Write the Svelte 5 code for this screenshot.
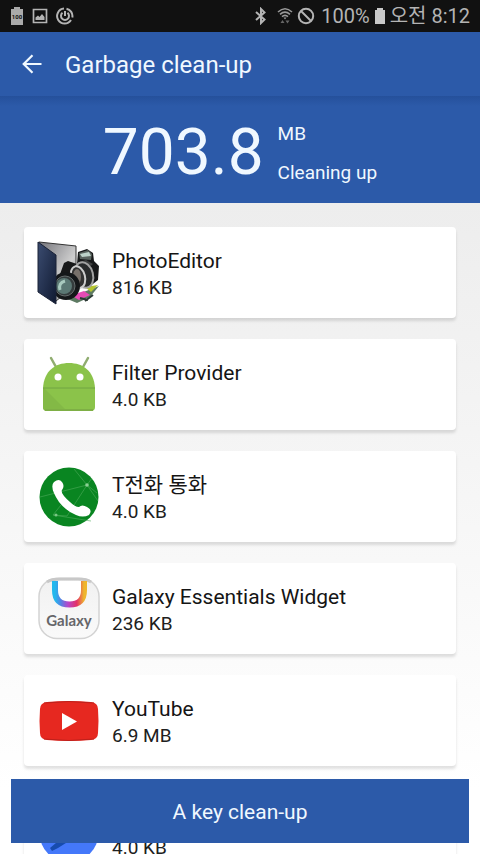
<script lang="ts">
  interface App {
    id: string;
    name?: string;
    size: string;
  }

  const apps: App[] = [
    { id: 'photo', name: 'PhotoEditor', size: '816 KB' },
    { id: 'android', name: 'Filter Provider', size: '4.0 KB' },
    { id: 'phone', name: 'T전화 통화', size: '4.0 KB' },
    { id: 'galaxy', name: 'Galaxy Essentials Widget', size: '236 KB' },
    { id: 'youtube', name: 'YouTube', size: '6.9 MB' },
    { id: 'blue', size: '4.0 KB' },
  ];
</script>

<div class="screen">
  <div class="status-bar">
    <div class="status-group left">
      <svg width="14" height="18" viewBox="0 0 14 18">
        <path d="M4 0h6v2h3v16H1V2h3z" fill="#aaa" />
        <text x="7" y="12" text-anchor="middle" class="battery-text">100</text>
      </svg>
      <svg width="16" height="16" viewBox="0 0 16 16">
        <path d="M1.5 1.5h13v13h-13z" fill="none" stroke="#b4b4b4" stroke-width="1.7" />
        <path d="M3.5 12V9.500l2.500-2 1.500 1.500 2.500-3 2.500 3V12z" fill="#b4b4b4" />
      </svg>
      <svg width="18" height="18" viewBox="0 0 18 18" fill="none" stroke="#b4b4b4" stroke-width="2">
        <path d="M8 1.600A7.500 7.500 0 1 0 15 13M10.500 1.700a7.500 7.500 0 0 1 5.800 8.800" />
        <path d="M6.500 5.800a4 4 0 1 0 5 0M9 4v5" />
      </svg>
    </div>
    <div class="status-group right">
      <svg width="12" height="18" viewBox="0 0 12 18">
        <path d="M1 5l8.500 7.500L6 16V2l3.500 3.500L1 13" fill="none" stroke="#b4b4b4" stroke-width="2" />
      </svg>
      <svg class="wifi" width="16" height="18" viewBox="0 0 16 18">
        <g fill="none" stroke="#999" stroke-width="1.600">
          <path d="M1 5Q8-1.500 15 5M3 7.300Q8 2.800 13 7.300M5 9.600Q8 7 11 9.600" />
        </g>
        <path d="M6.500 10.500h3L8 12.500z" fill="#999" />
        <path d="M3.500 16l2-3 2 3zM8.500 13.500h4l-2 3z" fill="#666" />
      </svg>
      <svg width="18" height="18" viewBox="0 0 18 18" fill="none" stroke="#b4b4b4" stroke-width="2">
        <circle cx="9" cy="9" r="7.200" />
        <path d="M4 4l10 10" />
      </svg>
      <span class="percent">100%</span>
      <svg class="battery" width="12" height="18" viewBox="0 0 12 18">
        <path d="M3 1h6v2h2v14H1V3h2z" fill="#c8c8c8" />
      </svg>
      <span>오전 8:12</span>
    </div>
  </div>

  <header class="toolbar">
    <button class="back" aria-label="Back">
      <svg width="20" height="20" viewBox="0 0 20 20" fill="none" stroke="#f0f8ff" stroke-width="2.200">
        <path d="M19.500 10H2M10.500 1.200L1.700 10l8.800 8.800" />
      </svg>
    </button>
    <h1>Garbage clean-up</h1>
  </header>

  <section class="summary">
    <span class="amount">703.8</span>
    <div class="summary-info">
      <span>MB</span>
      <span>Cleaning up</span>
    </div>
  </section>

  <main>
    <ul>
      {#each apps as app (app.id)}
        <li class="card">
          <svg class="app-icon" viewBox="0 0 64 64" aria-hidden="true">
            {#if app.id === 'photo'}
              <defs>
                <linearGradient id="folder" x1="0" y1="0" x2="1" y2="1">
                  <stop offset="0" stop-color="#3b4c70" />
                  <stop offset="1" stop-color="#101a32" />
                </linearGradient>
                <linearGradient id="folder-back" x1="0" y1="0" x2="1" y2="1">
                  <stop offset="0" stop-color="#74747a" />
                  <stop offset=".6" stop-color="#cfcfcf" />
                  <stop offset="1" stop-color="#777" />
                </linearGradient>
              </defs>
              <path d="M2 1l37 4v39L19 60 2 50z" fill="url(#folder-back)" stroke="#333" />
              <path d="M44 52l18-7-9 11-13 6-12-5z" fill="#5d7a62" />
              <path d="M48 46l13-2-7 7z" fill="#b5c52f" />
              <path d="M38 53l9-3 6 4-11 5-5-3z" fill="#e64bb5" />
              <path d="M48 60l8-6M43 57l8 2" stroke="#2b3934" stroke-width="2" />
              <path d="M27 22l4-2 9 3 1-12 9-3 6 4 1 8 5 5-1 14-9 7H29l-7-10z" fill="#171819" />
              <path d="M42 12l9-3 4 4-1 6-11-1z" fill="#59635e" />
              <path d="M43 13l9-2 2 4-9 1z" fill="#bdd2c9" />
              <path d="M40 22l9-3 7 4-6 5z" fill="#3e4040" />
              <ellipse cx="47" cy="34" rx="9" ry="13" transform="rotate(-15 47 34)" fill="#292b2c" stroke="#a2a2a2" stroke-width="2" />
              <ellipse cx="41" cy="36" rx="7" ry="11" transform="rotate(-15 41 36)" fill="#333" stroke="#ccc" stroke-width="2" />
              <ellipse cx="40" cy="36" rx="4" ry="8" fill="#77706a" />
              <circle cx="29" cy="45" r="14" fill="#141719" />
              <circle cx="28" cy="45" r="10" fill="#343c3d" stroke="#666d6d" />
              <circle cx="27" cy="45" r="8" fill="#5b7874" />
              <path d="M23 49q-2-7 5-9" fill="none" stroke="#a9cabf" stroke-width="3" />
              <path d="M1 1l18 13v49L1 51z" fill="url(#folder)" stroke="#1a2237" />
            {:else if app.id === 'android'}
              <path d="M14 5l5 9M51 5l-5 9" stroke="#90ad70" stroke-width="2.500" stroke-linecap="round" />
              <path d="M6 35C7 18 18 10 32 10s25 8 26 25v19q0 4-4 4H10q-4 0-4-4z" fill="#8bc34a" />
              <path d="M7 35l23 23H10q-4 0-4-4V35z" fill="#83b946" />
              <path d="M6 35h52" stroke="#71a442" />
              <path d="M8 57h48" stroke="#7eaf45" stroke-width="2" />
              <circle cx="21" cy="24" r="3.500" fill="#fff" />
              <circle cx="43" cy="24" r="3.500" fill="#fff" />
            {:else if app.id === 'phone'}
              <circle cx="32" cy="32" r="29.500" fill="#098521" />
              <path d="M3 32l47-12 11 16M37 4l13 16-20 31-14-1 38 6M50 20l5-7M50 20l10 8M16 50l8-10" fill="none" stroke="#4dab5b" stroke-width=".6" />
              <circle cx="50" cy="20" r="1.800" fill="#8bd094" />
              <circle cx="19" cy="50" r="1.500" fill="#79c785" />
              <path d="M17 17q5-4 8 0 3 4 0 8-2 3 8 12 5 5 9 5 3-3 8 0 6 3 2 8-6 3-13 0-10-4-17-13-10-15-5-20z" fill="#fff" />
            {:else if app.id === 'galaxy'}
              <defs>
                <linearGradient id="shell" x1="0" y1="0" x2="0" y2="1">
                  <stop offset="0" stop-color="#f1f1f1" />
                  <stop offset="1" stop-color="#fafafa" />
                </linearGradient>
                <linearGradient id="rainbow" x1="0" y1="0" x2="1" y2="0">
                  <stop offset="0" stop-color="#23b8ed" />
                  <stop offset=".2" stop-color="#5483e4" />
                  <stop offset=".45" stop-color="#b646cb" />
                  <stop offset=".75" stop-color="#e43267" />
                  <stop offset="1" stop-color="#eeb62d" />
                </linearGradient>
              </defs>
              <rect x="2" y="1.500" width="60" height="60" rx="18" fill="url(#shell)" stroke="#d3d3d3" stroke-width="1.500" />
              <path d="M10 5q5-3 13-3h18q8 0 13 3" fill="none" stroke="#c8c8c8" stroke-width="3" />
              <path d="M20 4h25v12q0 11-12.500 11T20 16z" fill="#fff" />
              <path d="M18 4v9q0 14.500 14.500 14.500T47 13V4" fill="none" stroke="url(#rainbow)" stroke-width="6" />
              <text x="32" y="49" text-anchor="middle" class="galaxy-text">Galaxy</text>
            {:else if app.id === 'youtube'}
              <path d="M10 13Q32 11 54 13q7 1 7 7 1 12 0 24 0 6-7 7-22 2-44 0-7-1-7-7-1-12 0-24 0-6 7-7z" fill="#e62820" />
              <path d="M7 14q25-3 50 0M7 50q25 3 50 0" fill="none" stroke="#bd211c" />
              <path d="M25 24v17l15-8.500z" fill="#fff" />
            {:else}
              <circle cx="32" cy="32" r="29.500" fill="#4478fa" />
              <path d="M13 47l19-16 8 4-19 12-6 3z" fill="#174cae" />
            {/if}
          </svg>
          <div class="details">
            <span class="name">{app.name ?? ''}</span>
            <span class="size">{app.size}</span>
          </div>
        </li>
      {/each}
    </ul>
  </main>

  <button class="clean">A key clean-up</button>
</div>

<style>
  :global(body) {
    margin: 0;
  }

  .screen {
    display: flex;
    flex-direction: column;
    height: 100vh;
    overflow: hidden;
    font-family: Roboto, 'Noto Sans CJK KR', sans-serif;
    color: #202020;
    background: #fff;
  }

  .status-bar {
    display: flex;
    flex-shrink: 0;
    align-items: center;
    justify-content: space-between;
    height: 32px;
    padding: 0 10px;
    background: #111;
    color: #b4b4b4;
    font-size: 20px;
    line-height: 32px;
  }

  .status-group {
    display: flex;
    align-items: center;
  }

  .status-group.left {
    gap: 8px;
  }

  .status-group.right {
    gap: 4px;
  }

  .wifi {
    margin-left: 6px;
  }

  .percent {
    margin-left: 2px;
  }

  .battery-text {
    font-size: 6px;
    font-weight: 700;
    fill: #111;
  }

  .toolbar {
    display: flex;
    flex-shrink: 0;
    align-items: center;
    height: 64px;
    background: #2c5aa9;
    color: #f0f8ff;
  }

  .back {
    display: flex;
    align-items: center;
    justify-content: flex-end;
    width: 42px;
    height: 48px;
    padding: 0;
    border: 0;
    background: none;
  }

  h1 {
    margin: 0;
    padding: 2px 0 0 23px;
    font-size: 24px;
    font-weight: 400;
    line-height: 32px;
  }

  .summary {
    display: flex;
    flex-shrink: 0;
    align-items: center;
    justify-content: center;
    gap: 14px;
    box-sizing: border-box;
    height: 107px;
    padding-top: 7px;
    background: linear-gradient(#25509b, #2c5aa9 10px);
    color: #f0f8ff;
  }

  .amount {
    font-size: 64px;
    line-height: 80px;
  }

  .summary-info {
    display: flex;
    flex-direction: column;
    gap: 15px;
    font-size: 19px;
    line-height: 24px;
  }

  main {
    flex: 1;
    min-height: 0;
    overflow: hidden;
    background: linear-gradient(#ededed, #fff 90%);
  }

  ul {
    display: flex;
    flex-direction: column;
    gap: 21px;
    margin: 0;
    padding: 24px;
    list-style: none;
  }

  .card {
    display: flex;
    flex-shrink: 0;
    align-items: center;
    gap: 11px;
    box-sizing: border-box;
    height: 91px;
    padding: 0 13px;
    border-radius: 4px;
    background: #fff;
    box-shadow: 0 3px 3px rgba(0, 0, 0, 0.12);
  }

  .app-icon {
    flex-shrink: 0;
    width: 64px;
    height: 64px;
  }

  .galaxy-text {
    font-family: Lato, sans-serif;
    font-size: 15px;
    font-weight: 700;
    fill: #66666a;
  }

  .details {
    display: flex;
    flex-direction: column;
  }

  .name {
    height: 30px;
    font-size: 21px;
    line-height: 30px;
    color: #151515;
  }

  .size {
    font-size: 19px;
    line-height: 24px;
  }

  .clean {
    position: fixed;
    right: 11px;
    bottom: 11px;
    left: 11px;
    height: 64px;
    padding: 2px 0 0;
    border: 0;
    background: #2c5aa9;
    color: #f0f8ff;
    font-family: inherit;
    font-size: 21px;
  }
</style>
